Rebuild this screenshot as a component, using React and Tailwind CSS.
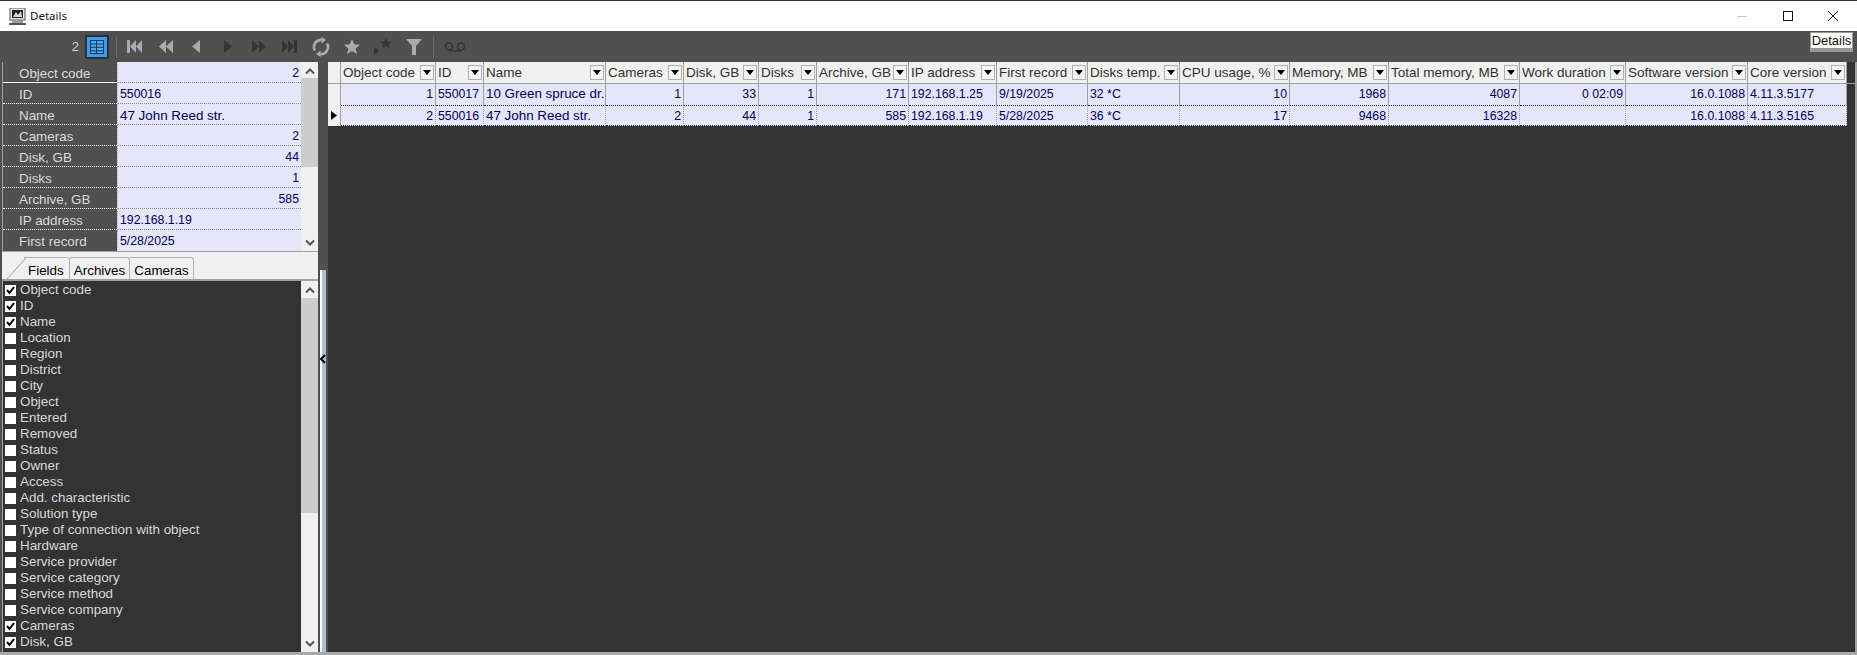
const vertical = [
  ['Object code', '2', true],
  ['ID', '550016', false],
  ['Name', '47 John Reed str.', false],
  ['Cameras', '2', true],
  ['Disk, GB', '44', true],
  ['Disks', '1', true],
  ['Archive, GB', '585', true],
  ['IP address', '192.168.1.19', false],
  ['First record', '5/28/2025', false],
];

const fields = [
  ['Object code', 1], ['ID', 1], ['Name', 1], ['Location'], ['Region'], ['District'], ['City'], ['Object'],
  ['Entered'], ['Removed'], ['Status'], ['Owner'], ['Access'], ['Add. characteristic'], ['Solution type'],
  ['Type of connection with object'], ['Hardware'], ['Service provider'], ['Service category'], ['Service method'],
  ['Service company'], ['Cameras', 1], ['Disk, GB', 1],
];

const columns = [
  ['Object code', true], ['ID'], ['Name'], ['Cameras', true], ['Disk, GB', true], ['Disks', true],
  ['Archive, GB', true], ['IP address'], ['First record'], ['Disks temp.'], ['CPU usage, %', true],
  ['Memory, MB', true], ['Total memory, MB', true], ['Work duration', true], ['Software version', true], ['Core version'],
];

const rows = [
  ['1', '550017', '10 Green spruce dr.', '1', '33', '1', '171', '192.168.1.25', '9/19/2025', '32 *C', '10', '1968', '4087', '0 02:09', '16.0.1088', '4.11.3.5177'],
  ['2', '550016', '47 John Reed str.', '2', '44', '1', '585', '192.168.1.19', '5/28/2025', '36 *C', '17', '9468', '16328', '', '16.0.1088', '4.11.3.5165'],
];

const gridCols = 'grid grid-cols-[13px_95px_48px_122px_78px_75px_58px_92px_88px_91px_92px_110px_99px_131px_106px_122px_99px]';

function Chevron({ down }) {
  return (
    <svg width="12" height="8" viewBox="0 0 12 8" fill="none" stroke="#555" strokeWidth="2">
      <path d={down ? 'M2 1.5 L6 5.5 L10 1.5' : 'M2 6.5 L6 2.5 L10 6.5'} />
    </svg>
  );
}

function Slot({ children }) {
  return <div className="w-[31px] h-[31px] flex items-center justify-center shrink-0">{children}</div>;
}

function Toolbar() {
  const light = '#a9a9b0';
  const dark = '#343438';
  return (
    <div className="h-[31px] shrink-0 flex items-center bg-[#505050]">
      <div className="w-[80px] text-right text-[13px] text-[#cfcfcf] pr-[1px]">2</div>
      <div className="ml-[5px] w-[24px] h-[24px] bg-[#26323c] flex items-center justify-center shrink-0">
        <svg width="20" height="20" viewBox="0 0 20 20">
          <rect x="0" y="0" width="20" height="20" fill="#3d9be9" />
          <rect x="3" y="3" width="14" height="14" fill="#163a5c" />
          <path d="M4 4h5v2.4H4zM10 4h6v2.4h-6zM4 7.4h5v2.4H4zM10 7.4h6v2.4h-6zM4 10.8h5v2.4H4zM10 10.8h6v2.4h-6zM4 14.2h5V16H4zM10 14.2h6V16h-6z" fill="#4aa8f0" />
        </svg>
      </div>
      <div className="ml-[7px] mr-[2px] w-px h-[22px] bg-[#6a6a6a] shrink-0" />
      <Slot>
        <svg width="15" height="13" viewBox="0 0 15 13" fill={light}><path d="M0 0h3v13H0zM9 0v13L3 6.5zM15 0v13L9 6.5z" /></svg>
      </Slot>
      <Slot>
        <svg width="14" height="13" viewBox="0 0 14 13" fill={light}><path d="M7 0v13L0 6.5zM14 0v13L7 6.5z" /></svg>
      </Slot>
      <Slot>
        <svg width="9" height="13" viewBox="0 0 9 13" fill={light}><path d="M8 0v13L0 6.5z" /></svg>
      </Slot>
      <Slot>
        <svg width="9" height="13" viewBox="0 0 9 13" fill={dark}><path d="M1 0v13L9 6.5z" /></svg>
      </Slot>
      <Slot>
        <svg width="14" height="13" viewBox="0 0 14 13" fill={dark}><path d="M0 0v13L7 6.5zM7 0v13L14 6.5z" /></svg>
      </Slot>
      <Slot>
        <svg width="15" height="13" viewBox="0 0 15 13" fill={dark}><path d="M0 0v13L6 6.5zM6 0v13L12 6.5zM12 0h3v13h-3z" /></svg>
      </Slot>
      <Slot>
        <svg width="18" height="20" viewBox="0 0 18 20" fill="none" stroke={light} strokeWidth="2.6">
          <path d="M3 13.5 A7 7 0 0 1 10 3" />
          <path d="M15 6.5 A7 7 0 0 1 8 17" />
          <path d="M9.5 0 L14 3 L9.5 6.5 Z" fill={light} stroke="none" />
          <path d="M8.5 13.5 L4 17 L8.5 20 Z" fill={light} stroke="none" />
        </svg>
      </Slot>
      <Slot>
        <svg width="16" height="15" viewBox="0 0 16 15" fill={light}><path d="M8 0 L10.2 5.2 L16 5.7 L11.6 9.4 L13 15 L8 12 L3 15 L4.4 9.4 L0 5.7 L5.8 5.2 Z" /></svg>
      </Slot>
      <Slot>
        <svg width="18" height="17" viewBox="0 0 18 17" fill={dark}>
          <path d="M0 9 L5 13 L0 17 Z" />
          <path d="M12 0 L13.6 3.4 L18 3.8 L14.7 6.4 L15.7 10 L12 8 L8.3 10 L9.3 6.4 L6 3.8 L10.4 3.4 Z" />
        </svg>
      </Slot>
      <Slot>
        <svg width="16" height="16" viewBox="0 0 16 16" fill={light}><path d="M0 0h16L10 7v9H6V7z" /></svg>
      </Slot>
      <div className="ml-[4px] w-px h-[22px] bg-[#6a6a6a] shrink-0" />
      <div className="ml-[10px] shrink-0 flex items-center">
        <svg width="22" height="10" viewBox="0 0 22 10" fill="none" stroke={dark} strokeWidth="1.6">
          <circle cx="5" cy="4.5" r="3.6" />
          <circle cx="17" cy="4.5" r="3.6" />
          <path d="M5 8.7h12" />
        </svg>
      </div>
    </div>
  );
}

function Scrollbar({ thumbTop, thumbHeight }) {
  return (
    <div className="w-[17px] shrink-0 bg-[#f0f0f0] flex flex-col justify-between relative">
      <div className="h-[17px] flex items-center justify-center"><Chevron /></div>
      <div className="absolute left-0 right-0 bg-[#cdcdcd]" style={{ top: thumbTop, height: thumbHeight }} />
      <div className="h-[17px] flex items-center justify-center"><Chevron down /></div>
    </div>
  );
}

function VerticalGrid() {
  return (
    <div className="h-[190px] shrink-0 flex border-l border-b border-[#a0a0a0] overflow-hidden">
      <div className="flex-1 flex flex-col min-w-0">
        {vertical.map(([label, value, right], i) => (
          <div key={label} className="flex h-[21px] shrink-0 last:h-[22px]">
            <div className={`w-[114px] shrink-0 bg-[#505050] text-[#dadada] pl-[16px] pt-[2px] border-b border-white ${i === 0 ? 'border-solid' : 'border-dotted'}`}>
              {label}
            </div>
            <div className={`flex-1 bg-[#e6e6fa] text-[#00005c] border-l border-[#b0b0b0] border-b border-b-[#888] border-dotted px-[2px] pt-[2px] ${right ? 'text-right' : 'text-left'} ${/^[\d./]+$/.test(value) ? 'text-[12.3px]' : ''}`}>
              {value}
            </div>
          </div>
        ))}
      </div>
      <Scrollbar thumbTop={16} thumbHeight={89} />
    </div>
  );
}

function Tabs() {
  return (
    <div className="h-[29px] shrink-0 bg-[#f0f0f0] flex items-end pl-[22px] border-b-2 border-[#a0a0a0] relative text-black">
      <svg className="absolute left-[3px] top-[5px]" width="22" height="24" viewBox="0 0 22 24" fill="none" stroke="#a0a0a0">
        <path d="M1 23 L21 1" />
      </svg>
      <div className="w-[45px] h-[22px] border-t border-[#b0b0b0] rounded-tr-[3px] pl-[4px] pt-[3px]">Fields</div>
      <div className="w-[61px] h-[22px] border-t border-l border-r border-[#b0b0b0] rounded-t-[3px] text-center pt-[3px]">Archives</div>
      <div className="w-[64px] h-[22px] border-t border-r border-[#b0b0b0] rounded-tr-[3px] text-center pt-[3px]">Cameras</div>
    </div>
  );
}

function Checkbox({ on }) {
  return (
    <div className="w-[11px] h-[11px] bg-white shrink-0 flex items-center justify-center">
      {on && (
        <svg width="9" height="9" viewBox="0 0 9 9" fill="none" stroke="#000" strokeWidth="2">
          <path d="M1 4 L3.5 7 L8 1" />
        </svg>
      )}
    </div>
  );
}

function FieldList() {
  return (
    <div className="flex-1 flex min-h-0 border-l border-[#a0a0a0] bg-[#333333]">
      <div className="flex-1 pt-[1px] pl-[2px] min-w-0">
        {fields.map(([name, on]) => (
          <div key={name} className="h-[16px] flex items-center gap-[4px] text-[#d8d8d8] whitespace-nowrap">
            <Checkbox on={on} />
            <span>{name}</span>
          </div>
        ))}
      </div>
      <Scrollbar thumbTop={17} thumbHeight={215} />
    </div>
  );
}

function Splitter() {
  return (
    <div className="w-[9px] shrink-0 flex flex-col bg-[#505050]">
      <div className="h-[208px] shrink-0" />
      <div className="flex-1 ml-[2px] mr-[1px] bg-white border-l-[2px] border-white relative">
        <div className="absolute left-0 right-0 top-0 bottom-0 bg-[#a9c3d3]" />
        <svg className="absolute left-[-3px] top-[84px]" width="7" height="10" viewBox="0 0 7 10" fill="none" stroke="#000" strokeWidth="2">
          <path d="M6 1 L2 5 L6 9" />
        </svg>
      </div>
    </div>
  );
}

function HeaderCell({ title }) {
  return (
    <div className="flex items-center justify-between border-r border-[#a0a0a0] bg-[#f0f0f0] text-[#303030] text-[13.5px] pl-[2px] pr-[1px] whitespace-nowrap overflow-hidden">
      <span className="pt-[1px]">{title}</span>
      <span className="w-[14px] h-[15px] shrink-0 border border-[#b0b0b0] bg-[#f4f4f4] flex items-center justify-center">
        <svg width="8" height="5" viewBox="0 0 8 5" fill="#000"><path d="M0 0h8L4 5z" /></svg>
      </span>
    </div>
  );
}

function DataGrid() {
  return (
    <div className="flex-1 min-w-0 bg-[#333333] border-l border-[#505050] border-r-2 border-r-[#a0a0a0]">
      <div className={`${gridCols} h-[22px] border-b border-[#a0a0a0]`}>
        <div className="bg-[#f0f0f0] border-r border-[#a0a0a0]" />
        {columns.map(([title]) => (
          <HeaderCell key={title} title={title} />
        ))}
      </div>
      {rows.map((row, r) => (
        <div key={r} className={`${gridCols} h-[21px] ${r === 1 ? 'h-[20px]' : ''}`}>
          <div className="bg-[#f0f0f0] border-r border-[#a0a0a0] flex items-center justify-center">
            {r === 1 && (
              <svg width="6" height="9" viewBox="0 0 6 9" fill="#000"><path d="M0 0v9L6 4.5z" /></svg>
            )}
          </div>
          {row.map((cell, c) => (
            <div
              key={c}
              className={`bg-[#e6e6fa] text-[#00005c] border-r border-[#a0a0a0] px-[2px] whitespace-nowrap overflow-hidden leading-[20px] ${columns[c][1] ? 'text-right' : 'text-left'} ${c === 2 ? '' : 'text-[12.3px]'} ${r === 1 ? 'border-y border-dotted border-y-[#222]' : ''}`}
            >
              {cell}
            </div>
          ))}
        </div>
      ))}
    </div>
  );
}

export default function App() {
  return (
    <div className="w-[1857px] h-[655px] relative flex flex-col overflow-hidden bg-[#505050] text-[13.4px] font-['Liberation_Sans',Arial,sans-serif]">
      <div className="h-[31px] shrink-0 bg-white border-t border-[#333] flex items-center pl-[9px]">
        <svg width="17" height="17" viewBox="0 0 17 17">
          <rect x="1" y="0" width="15" height="12" fill="#e8e8e8" stroke="#555" />
          <rect x="3" y="2" width="11" height="8" fill="#222" />
          <path d="M4 9 L7 4 L9 7 L12 3 L13 9 Z" fill="#ddd" />
          <rect x="3" y="12" width="11" height="3" fill="#999" />
          <rect x="0" y="15" width="17" height="2" fill="#555" />
        </svg>
        <span className="ml-[4px] text-[11.5px] font-['Noto_Sans',sans-serif] text-[#111]">Details</span>
        <div className="ml-auto flex items-center pr-[19px]">
          <svg width="10" height="1" viewBox="0 0 10 1"><rect width="10" height="1" fill="#c8c8c8" /></svg>
          <svg className="ml-[36px]" width="10" height="10" viewBox="0 0 10 10" fill="none" stroke="#111"><rect x="0.5" y="0.5" width="9" height="9" /></svg>
          <svg className="ml-[35px]" width="10" height="10" viewBox="0 0 10 10" fill="none" stroke="#111"><path d="M0 0 L10 10 M10 0 L0 10" /></svg>
        </div>
      </div>
      <Toolbar />
      <div className="flex-1 flex min-h-0 pl-[2px] border-b-[3px] border-[#a8a8a8]">
        <div className="w-[316px] shrink-0 flex flex-col">
          <VerticalGrid />
          <Tabs />
          <FieldList />
        </div>
        <Splitter />
        <DataGrid />
      </div>
      <div className="absolute left-[1810px] top-[32px] w-[43px] h-[17px] bg-white border border-[#999] shadow-[0_3px_0_#999] text-[#111] text-[13px] leading-[15px] text-center">
        Details
      </div>
    </div>
  );
}
